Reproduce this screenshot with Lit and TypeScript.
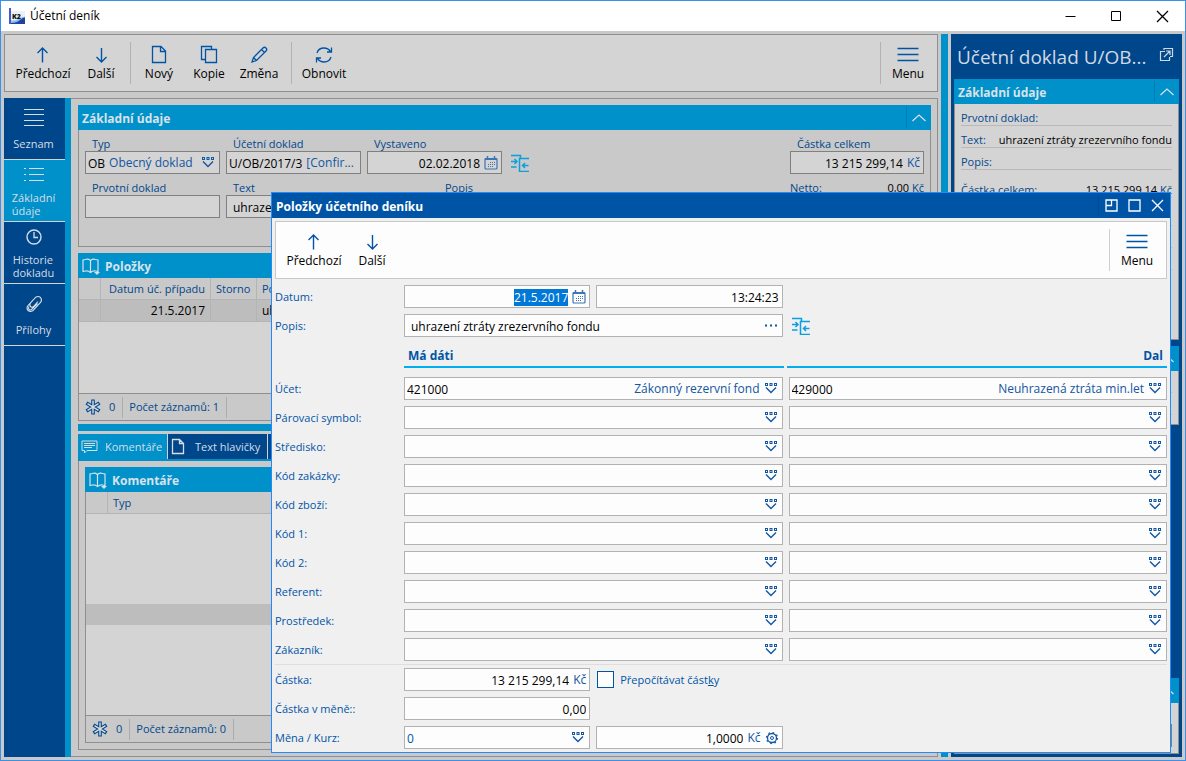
import { LitElement, html, css, svg, nothing } from "lit";
import { customElement } from "lit/decorators.js";
import { classMap } from "lit/directives/class-map.js";

const glyph = (w: number, h: number, body: unknown, cls = "") =>
  html`<svg class=${cls} width=${w} height=${h} viewBox="0 0 ${w} ${h}" fill="none" stroke="currentColor" aria-hidden="true">${body}</svg>`;

const icons = {
  logo: () => html`<svg width="16" height="16" viewBox="0 0 16 16" aria-hidden="true">
    <rect x="2" y="3" width="14" height="12" fill="#eceff5" />
    <rect x="0" y="0" width="2" height="16" fill="#4458d0" />
    <path d="M2 12.500Q6 13 9 11T16 8.500V16H2Z" fill="#7fc4f0" />
    <path d="M2 15Q8 15 11 12T16 9.500V16H2Z" fill="#24409c" />
    <text x="3" y="10.500" font-family="Open Sans, sans-serif" font-size="7" font-weight="800" fill="#111">K2</text>
  </svg>`,
  up: () => glyph(20, 20, svg`<path d="M9.500 3V17.500M4.500 8L9.500 3L14.500 8" stroke-width="1.400"/>`),
  down: () => glyph(20, 20, svg`<path d="M10.500 3V17M5.500 12L10.500 17L15.500 12" stroke-width="1.400"/>`),
  page: () => glyph(20, 20, svg`<path d="M3.500 1.500H12L16.500 6V17.500H3.500ZM11.500 1.500V6.500H16.500" stroke-width="1.300"/>`),
  sheet: () => glyph(14, 17, svg`<path d="M1.500 1.500H8.500L12.500 5.500V15.500H1.500ZM8.500 1.500V5.500H12.500M4 1.500H6.500" stroke-width="1.300"/>`, "tab-icon"),
  copy: () => glyph(20, 20, svg`<path d="M6 14.500H2.500V1.500H12.500V4M6.500 4.500H17.500V17.500H6.500Z" stroke-width="1.300"/>`),
  pencil: () => glyph(20, 20, svg`<path d="M3 17L4.500 12.500L14 3Q15.500 1.500 17 3Q18.500 4.500 17 6L7.500 15.500ZM12.500 4.500L15.500 7.500M4.500 12.500L7.500 15.500" stroke-width="1.300"/>`),
  refresh: () => glyph(20, 20, svg`<path d="M3 8Q4.500 3 10 3Q14 3 16.500 6.500M17.500 2.500V7H13M17 12Q15.500 17 10 17Q6 17 3.500 13.500M2.500 17.500V13H7" stroke-width="1.300"/>`),
  menu: () => glyph(22, 20, svg`<path d="M0.500 3.500H21.500M0.500 9.500H21.500M0.500 15.500H21.500" stroke-width="1.400"/>`),
  lines: () => glyph(20, 22, svg`<path d="M0 2.500H20M0 7.500H20M0 13.500H20M0 18.500H20"/>`),
  list: () => glyph(20, 22, svg`<path d="M5 4.500H20M5 10.500H20M5 16.500H20M0 4.500H2M0 10.500H2M0 16.500H2"/>`),
  clock: () => glyph(18, 22, svg`<circle cx="9" cy="11" r="7" stroke-width="1.400"/><path d="M9 6V11.500H13" stroke-width="1.300"/>`),
  clip: () => glyph(20, 22, svg`<path d="M9 7L4 12.500Q2 15 4 17.500Q6.500 19.500 9 17.500L16.500 9.500Q18.500 7 16.500 4.500Q14 2.500 11.500 4.500L6.500 10Q5 12 6.500 13.500Q8 15 9.500 13.500L14 8.500M13.500 10.500L7.500 16.500Q6 17.500 5 16.500Q4 15 5 13.500" stroke-width="1.100"/>`),
  lookup: () => glyph(14, 12, svg`<g fill="currentColor" stroke="none"><path fill-rule="evenodd" d="M1 0H4V3H1ZM2 1V2H3V1ZM5.500 0H8.500V3H5.500ZM6.500 1V2H7.500V1ZM10 0H13V3H10ZM11 1V2H12V1Z"/></g><path d="M2 4.500L7 9.500L12 4.500" stroke-width="1.400"/>`),
  calendar: () => glyph(14, 14, svg`<rect x="1" y="2.500" width="12" height="10.500" rx="1" stroke-width="1.200"/><path d="M1 3H13" stroke-width="2"/><path d="M3.500 0V3M10.500 0V3" stroke-width="1.500"/><path d="M6 6.500H12M4 8.500H12M4 10.500H10" stroke-dasharray="1 1" stroke-width="1"/>`, "soft"),
  dots: () => glyph(14, 12, svg`<path d="M1 5.500H3M6 5.500H8M11 5.500H13" stroke-width="2"/>`),
  gear: () => glyph(14, 14, svg`<circle cx="7" cy="7" r="4.500" stroke-width="1.300"/><circle cx="7" cy="7" r="1.500"/><circle cx="7" cy="7" r="5.500" stroke-width="1.300" stroke-dasharray="1.700 2.600"/>`),
  align: () => glyph(18, 18, svg`<path d="M0 1.500H9.500V5M0 13H5.500M18 4.500H8.500V17.500H18M0 7.500H5.500M3.500 5L6 7.500L3.500 10M17.500 11.500H12M14 9L11.500 11.500L14 14" stroke-width="1.500"/>`, "bright"),
  chevron: () => glyph(14, 8, svg`<path d="M.5 7L7 1L13.500 7" stroke-width="1.200"/>`),
  book: () => glyph(18, 18, svg`<path d="M8.500 3.500Q6 1.500 3.500 2.500L1 3V14.500L3.500 14Q6 13.500 8.500 15.500Q11 13.500 13.500 14L16 14.500V3L13.500 2.500Q11 1.500 8.500 3.500V15" stroke-width="1.200"/><path d="M12 15H18L15 18Z" fill="currentColor" stroke="none"/>`),
  flake: () => glyph(16, 16, svg`<path d="M8 0.500V15.500M1.500 4L14.500 12M14.500 4L1.500 12" stroke-width="3.600"/><path class="core" d="M8 1.500V14.500M2.500 4.600L13.500 11.400M13.500 4.600L2.500 11.400" stroke-width="1.400"/>`),
  comment: () => glyph(17, 14, svg`<path d="M1 1H16V10.500H6L3.500 13V10.500H1ZM3 3.500H14M3 5.500H14M3 7.500H11" stroke-width="1"/>`),
  open: () => glyph(15, 15, svg`<path d="M6 4.500H1.500V13.500H10.500V10M5 3V1.500H13.500V9.500H11M5 10L11 4M7 4H11V8" stroke-width="1.200"/>`),
  pin: () => glyph(13, 13, svg`<path d="M1 1H12V12H1ZM6.500 1V6.500H1" stroke-width="1.300"/>`),
  square: () => glyph(13, 13, svg`<path d="M1 1H12V12H1Z" stroke-width="1.300"/>`),
  cross: () => glyph(13, 13, svg`<path d="M1 1L12 12M12 1L1 12" stroke-width="1.300"/>`),
  bar: () => glyph(13, 13, svg`<path d="M1.500 6.500H11.500"/>`),
  maximize: () => glyph(13, 13, svg`<path d="M1.500 1.500H10.500V10.500H1.500Z"/>`),
};

const codeRows: [string, string, string, string, string][] = [
  ["Účet:", "421000", "Zákonný rezervní fond", "429000", "Neuhrazená ztráta min.let"],
  ["Párovací symbol:", "", "", "", ""],
  ["Středisko:", "", "", "", ""],
  ["Kód zakázky:", "", "", "", ""],
  ["Kód zboží:", "", "", "", ""],
  ["Kód 1:", "", "", "", ""],
  ["Kód 2:", "", "", "", ""],
  ["Referent:", "", "", "", ""],
  ["Prostředek:", "", "", "", ""],
  ["Zákazník:", "", "", "", ""],
];

interface FieldOptions {
  id: string;
  value?: string;
  note?: string;
  unit?: string;
  icon?: unknown;
  action?: string;
  right?: boolean;
  inset?: boolean;
  aria?: string;
  fit?: boolean;
  blue?: boolean;
}

@customElement("app-root")
export class AppRoot extends LitElement {
  static styles = css`
    :host {
      display: block;
      --navy: #00468a;
      --blue: #0054a6;
      --cyan: #0091cb;
      --dim: #c9c9c9;
      --pale: #d4d4d4;
      --edge: #8f8f8f;
      font-family: "Open Sans", "Noto Sans", sans-serif;
      font-size: 12px;
      line-height: 16px;
      color: #000;
    }
    * { box-sizing: border-box; }
    svg { display: block; flex: none; }
    button { font: inherit; color: inherit; background: none; border: 0; padding: 0; display: flex; align-items: center; justify-content: center; }
    h1, h2, h3, p { margin: 0; font: inherit; }
    .window { position: relative; display: flex; flex-direction: column; min-height: 100vh; border: 1px solid #3b91ea; background: var(--dim); }
    .titlebar { display: flex; align-items: center; height: 30px; flex: none; padding: 0 16px 0 8px; gap: 5px; background: #fff; }
    .titlebar h1 { flex: 1; font-size: 12px; }
    .caption { display: flex; gap: 33px; }
    .workspace { flex: 1; display: flex; gap: 3px; padding: 3px; min-height: 0; }
    .main { flex: 1; min-width: 0; display: flex; flex-direction: column; gap: 6px; }
    .splitter { width: 7px; flex: none; background: var(--cyan); }

    .toolbar { display: flex; height: 58px; flex: none; border: 1px solid var(--edge); background: var(--pale); padding: 0 2px 0 9px; color: #000; }
    .group { display: flex; }
    .group.narrow { padding: 0 7px 0 3px; }
    .group.last { padding-left: 3px; }
    .tool { flex-direction: column; justify-content: flex-start; width: 58px; padding-top: 10px; gap: 1px; white-space: nowrap; }
    .narrow .tool { width: 50px; }
    .menu-tool { width: 54px; }
    .tool svg { color: var(--blue); }
    .rule { width: 1px; margin: 7px 0; background: #b2b2b2; }
    .grow { flex: 1; }

    .columns { flex: 1; display: flex; min-height: 0; }
    .sidebar { width: 67px; flex: none; background: var(--navy); border-right: 6px solid var(--cyan); font-size: 11px; line-height: 13px; color: #d6dde5; }
    .side { width: 100%; height: 62px; flex-direction: column; justify-content: space-evenly; padding-right: 2px; text-align: left; border-bottom: 1px solid #d4d4d4; }
    .side.active { background: var(--cyan); }
    .content { flex: 1; min-width: 0; display: flex; flex-direction: column; border: 1px solid var(--edge); border-left: 0; padding: 6px 6px 6px 7px; }

    .bar { display: flex; align-items: center; gap: 5px; height: 25px; flex: none; padding-left: 4px; background: var(--cyan); color: #d9e2e8; }
    .bar h2 { flex: 1; font-weight: 700; font-size: 12px; line-height: 18px; padding-top: 2px; }
    .fold { width: 25px; height: 21px; border-left: 1px solid #007db0; }
    .boxed { border: 1px solid var(--edge); border-top: 0; }

    .header-form { display: flex; justify-content: space-between; padding: 7px 6px 28px; }
    .left { display: grid; grid-template-columns: repeat(3, 135px) auto; gap: 7px 6px; }
    .stack { display: flex; flex-direction: column; min-width: 0; }
    .stack > label { padding-left: 7px; font-size: 11px; line-height: 14px; color: #00478c; }
    .wide { grid-column: 2 / 4; }
    .pair { display: flex; gap: 84px; line-height: 14px; font-size: 11px; padding-left: 7px; }
    .pair label { width: 128px; color: #00478c; }
    .totals { width: 134px; display: flex; flex-direction: column; gap: 7px; }
    .line { display: flex; justify-content: space-between; font-size: 11px; line-height: 14px; }
    .tie { align-self: end; height: 23px; padding-left: 3px; }
    .tie-left { justify-content: flex-start; padding-left: 3px; }
    .bright { color: #0a9fe0; }
    .ink { color: #00478c; }

    .field { display: flex; align-items: center; gap: 4px; height: 23px; min-width: 0; border: 1px solid #808080; background: var(--pale); padding: 0 4px 0 2px; white-space: nowrap; }
    .field input { flex: 1 1 0; min-width: 0; width: 0; border: 0; outline: 0; padding: 1px 0 0; background: none; font: inherit; color: inherit; height: 19px; }
    .field.right input { text-align: right; }
    .field.right { padding-right: 3px; }
    .field.inset { padding-left: 6px; }
    .field.fit input { flex: none; field-sizing: content; width: auto; }
    .field .note { color: #1355a0; padding-top: 1px; }
    .field .fill { flex: 1; overflow: hidden; text-overflow: ellipsis; }
    .field button { color: #1257a5; }
    .soft { color: #3d74b4; }
    .blue input { color: var(--blue); }
    input::selection { background: #0078d7; color: #fff; }

    .panel { display: flex; flex-direction: column; flex: none; margin-top: 6px; }
    table { border-collapse: separate; border-spacing: 0; font-size: 12px; width: 100%; table-layout: fixed; }
    th { font-weight: 400; font-size: 11px; color: #00478c; background: var(--dim); text-align: left; }
    th, td { height: 22px; padding: 0 5px; border: 1px solid #b4b4b4; border-top: 0; border-left: 0; line-height: 16px; white-space: nowrap; overflow: hidden; }
    .rowed td { background: #bdbdbd; }
    .num { text-align: right; }
    .c0 { width: 22px; }
    .c1 { width: 110px; }
    .c2 { width: 46px; }
    .grid { flex: 1; background: var(--pale); overflow: hidden; }
    .empty { margin-top: 90px; height: 21px; background: #bdbdbd; }
    .status { display: flex; align-items: center; height: 27px; flex: none; border-top: 1px solid var(--edge); background: var(--dim); color: #00478c; font-size: 11px; padding-left: 6px; }
    .status span { display: flex; align-items: center; height: 21px; padding: 0 7px 0 6px; border-right: 1px solid #ababab; }
    .status svg { margin-right: 2px; }
    .core { stroke: #dcdcdc; }
    .hsplit { height: 7px; flex: none; margin: 3px 0; background: var(--cyan); }
    .tabs { display: flex; gap: 1px; height: 27px; flex: none; border-bottom: 2px solid var(--cyan); font-size: 11px; color: #d6dde5; background: linear-gradient(#d4d4d4, #d4d4d4) 0 0 / 190px 25px no-repeat; }
    .tab { height: 25px; width: 99px; padding: 0 4px 0 3px; gap: 7px; justify-content: flex-start; background: var(--navy); white-space: nowrap; }
    .tab.active { width: 89px; background: var(--cyan); }
    .tab-icon { margin-right: 3px; }
    .tabpage { flex: 1; min-height: 0; display: flex; flex-direction: column; padding: 6px; }
    .comments { flex: 1; margin: 0; }
    .items { height: 168px; }
    .body { display: flex; flex-direction: column; flex: 1; min-height: 0; }

    .preview { width: 231px; flex: none; display: flex; flex-direction: column; background: var(--navy); padding: 0 3px 3px; }
    .preview-head { display: flex; align-items: center; height: 45px; flex: none; padding: 0 5px 0 3px; color: #d0d9e3; }
    .preview-head h2 { flex: 1; font-size: 19px; line-height: 26px; white-space: nowrap; }
    .preview-head button { padding-bottom: 4px; }
    .sheet { background: var(--pale); padding: 5px 6px 0; font-size: 11px; line-height: 17px; }
    .sheet.first { height: 236px; }
    .sheet.second { height: 54px; margin-bottom: 6px; }
    .sheet.third { height: 51px; padding-top: 21px; }
    .fact { display: flex; justify-content: space-between; height: 17px; margin-bottom: 5px; border-bottom: 1px solid #b9b9b9; white-space: nowrap; color: #00478c; }
    .fact b { font-weight: 400; color: #000; }
    .apart { margin-top: 11px; }
    .gap { height: 6px; flex: none; }

    .dialog { position: absolute; left: 270px; right: 14px; top: 191px; border: 1px solid #1e8cff; background: #f0f0f0; color: #000; }
    .dialog-title { display: flex; align-items: center; height: 25px; padding-left: 4px; background: var(--blue); color: #fff; }
    .dialog-title h2 { flex: 1; font-weight: 700; font-size: 12px; line-height: 18px; padding-top: 2px; }
    .dialog-actions { display: flex; align-items: center; gap: 10px; height: 21px; padding: 0 6px 0 6px; border-left: 1px solid #004a94; }
    .dialog .toolbar { margin: 3px 3px 0; background: #fdfdfd; border-color: #c8c8c8; }
    .dialog .rule { background: #cfcfcf; }
    .dialog form { padding: 6px 3px 3px; display: flex; flex-direction: column; gap: 6px; }
    .row { display: grid; grid-template-columns: 123px minmax(0, 1fr) minmax(0, 1fr); gap: 6px; align-items: center; }
    .row > label, .check label { font-size: 11px; color: var(--blue); }
    .dialog .field { background: #fdfdfd; border-color: #b2b2b2; }
    .half { display: grid; grid-template-columns: 1fr 1fr; gap: 6px; min-width: 0; }
    .sides { display: grid; grid-template-columns: 1fr 1fr; gap: 3px; margin: 0 0 3px 129px; }
    .sides h3 { height: 25px; padding: 0 4px; line-height: 25px; border-bottom: 2px solid #00adee; color: var(--blue); font-weight: 700; font-size: 12px; }
    .sides .end { text-align: right; }
    .total { border-top: 1px solid #dedede; padding-top: 3px; margin-top: -3px; }
    .check { display: flex; align-items: center; gap: 6px; }
    .check input { appearance: none; width: 17px; height: 17px; margin: 0 0 0 1px; border: 1px solid var(--blue); background: #fdfdfd; }
  `;

  protected firstUpdated() {
    const date = this.renderRoot.querySelector<HTMLInputElement>("#entry-date");
    date?.focus({ preventScroll: true });
    date?.select();
  }

  private field(o: FieldOptions) {
    const cls = classMap({ field: true, right: !!o.right, inset: !!o.inset, fit: !!o.fit, blue: !!o.blue });
    return html`<div class=${cls}>
      <input id=${o.id} type="text" autocomplete="off" .value=${o.value ?? ""} aria-label=${o.aria ?? nothing} />
      ${o.note ? html`<span class=${classMap({ note: true, fill: !!o.fit })}>${o.note}</span>` : nothing}
      ${o.unit ? html`<span class="note">${o.unit}</span>` : nothing}
      ${o.icon ? html`<button type="button" aria-label=${o.action ?? "Vybrat"}>${o.icon}</button>` : nothing}
    </div>`;
  }

  private tool(label: string, icon: unknown, cls = "") {
    return html`<button type="button" class="tool ${cls}">${icon}<span>${label}</span></button>`;
  }

  private menuGroup() {
    return html`<span class="grow"></span><span class="rule"></span>${this.tool("Menu", icons.menu(), "menu-tool")}`;
  }

  private side(label: unknown, icon: unknown, active = false) {
    return html`<button type="button" class=${classMap({ side: true, active })}>${icon}<span>${label}</span></button>`;
  }

  private fold() {
    return html`<button type="button" class="fold" aria-label="Sbalit">${icons.chevron()}</button>`;
  }

  private status(count: number) {
    return html`<div class="status">${icons.flake()}<span>0</span><span>Počet záznamů: ${count}</span></div>`;
  }

  private headerCard() {
    return html`<section>
      <div class="bar"><h2>Základní údaje</h2>${this.fold()}</div>
      <div class="boxed header-form">
        <div class="left">
          <div class="stack"><label for="type">Typ</label>${this.field({ id: "type", value: "OB", note: "Obecný doklad", icon: icons.lookup(), fit: true })}</div>
          <div class="stack"><label for="doc">Účetní doklad</label>${this.field({ id: "doc", value: "U/OB/2017/3", note: "[Confir...", fit: true })}</div>
          <div class="stack"><label for="issued">Vystaveno</label>${this.field({ id: "issued", value: "02.02.2018", icon: icons.calendar(), action: "Kalendář", right: true })}</div>
          <button type="button" class="tie" aria-label="Porovnat">${icons.align()}</button>
          <div class="stack"><label for="origin">Prvotní doklad</label>${this.field({ id: "origin" })}</div>
          <div class="stack wide">
            <div class="pair"><label for="text">Text</label><span class="ink">Popis</span></div>
            ${this.field({ id: "text", value: "uhrazení ztráty zrezervního fondu", inset: true })}
          </div>
        </div>
        <div class="totals">
          <div class="stack"><label for="sum">Částka celkem</label>${this.field({ id: "sum", value: "13 215 299,14", unit: "Kč", right: true })}</div>
          <div class="line"><span class="ink">Netto:</span><span>0,00 <span class="ink">Kč</span></span></div>
        </div>
      </div>
    </section>`;
  }

  private itemsCard() {
    return html`<section class="panel items">
      <div class="bar">${icons.book()}<h2>Položky</h2></div>
      <div class="boxed body">
        <div class="grid">
          <table>
            <colgroup><col class="c0" /><col class="c1" /><col class="c2" /><col /></colgroup>
            <thead><tr><th></th><th class="num">Datum úč. případu</th><th>Storno</th><th>Popis</th></tr></thead>
            <tbody><tr class="rowed"><td></td><td class="num">21.5.2017</td><td></td><td>uhrazení ztráty zrezervního fondu</td></tr></tbody>
          </table>
        </div>
        ${this.status(1)}
      </div>
    </section>`;
  }

  private commentsArea() {
    return html`<div class="tabs" role="tablist">
        <button type="button" role="tab" aria-selected="true" class="tab active">${icons.comment()}Komentáře</button>
        <button type="button" role="tab" aria-selected="false" class="tab">${icons.sheet()}Text hlavičky</button>
        <button type="button" role="tab" aria-selected="false" class="tab" aria-label="Další záložka"></button>
      </div>
      <div class="boxed tabpage">
        <section class="panel comments">
          <div class="bar">${icons.book()}<h2>Komentáře</h2></div>
          <div class="boxed body">
            <div class="grid">
              <table>
                <colgroup><col class="c0" /><col /></colgroup>
                <thead><tr><th></th><th>Typ</th></tr></thead>
              </table>
              <div class="empty"></div>
            </div>
            ${this.status(0)}
          </div>
        </section>
      </div>`;
  }

  private preview() {
    return html`<aside class="preview">
      <div class="preview-head"><h2>Účetní doklad U/OB...</h2><button type="button" aria-label="Otevřít">${icons.open()}</button></div>
      <div class="bar"><h2>Základní údaje</h2>${this.fold()}</div>
      <div class="boxed sheet first">
        <div class="fact">Prvotní doklad:</div>
        <div class="fact">Text: <b>uhrazení ztráty zrezervního fondu</b></div>
        <div class="fact">Popis:</div>
        <div class="fact apart">Částka celkem:<span><b>13 215 299,14</b> Kč</span></div>
        <div class="fact apart"></div>
        <div class="fact"></div>
        <div class="fact"></div>
      </div>
      <div class="gap"></div>
      <div class="bar"><h2></h2>${this.fold()}</div>
      <div class="boxed sheet second">
        <div class="fact"></div>
        <div class="fact"></div>
      </div>
      <span class="grow"></span>
      <div class="bar"><h2></h2>${this.fold()}</div>
      <div class="boxed sheet third">${this.field({ id: "filter", aria: "Hodnota" })}</div>
    </aside>`;
  }

  private dialog() {
    return html`<section class="dialog" role="dialog" aria-labelledby="dialog-title">
      <div class="dialog-title">
        <h2 id="dialog-title">Položky účetního deníku</h2>
        <div class="dialog-actions">
          <button type="button" aria-label="Ukotvit">${icons.pin()}</button>
          <button type="button" aria-label="Maximalizovat">${icons.square()}</button>
          <button type="button" aria-label="Zavřít">${icons.cross()}</button>
        </div>
      </div>
      <div class="toolbar">
        <div class="group">${this.tool("Předchozí", icons.up())}${this.tool("Další", icons.down())}</div>
        ${this.menuGroup()}
      </div>
      <form>
        <div class="row">
          <label for="entry-date">Datum:</label>
          <div class="half">
            ${this.field({ id: "entry-date", value: "21.5.2017", icon: icons.calendar(), action: "Kalendář", right: true })}
            ${this.field({ id: "entry-time", value: "13:24:23", right: true, aria: "Čas" })}
          </div>
        </div>
        <div class="row">
          <label for="entry-text">Popis:</label>
          ${this.field({ id: "entry-text", value: "uhrazení ztráty zrezervního fondu", icon: icons.dots(), inset: true })}
          <button type="button" class="tie-left" aria-label="Porovnat">${icons.align()}</button>
        </div>
        <div class="sides"><h3>Má dáti</h3><h3 class="end">Dal</h3></div>
        ${codeRows.map(([label, debit, debitNote, credit, creditNote], i) => html`<div class="row">
          <label for="debit-${i}">${label}</label>
          ${this.field({ id: `debit-${i}`, value: debit, note: debitNote, icon: icons.lookup() })}
          ${this.field({ id: `credit-${i}`, value: credit, note: creditNote, icon: icons.lookup(), aria: `${label} Dal` })}
        </div>`)}
        <div class="row total">
          <label for="amount">Částka:</label>
          <div class="half">
            ${this.field({ id: "amount", value: "13 215 299,14", unit: "Kč", right: true })}
            <div class="check"><input id="recalc" type="checkbox" /><label for="recalc">Přepočítávat část<u>k</u>y</label></div>
          </div>
        </div>
        <div class="row">
          <label for="foreign">Částka v měně::</label>
          <div class="half">${this.field({ id: "foreign", value: "0,00", right: true })}</div>
        </div>
        <div class="row">
          <label for="currency">Měna / Kurz:</label>
          <div class="half">
            ${this.field({ id: "currency", value: "0", icon: icons.lookup(), blue: true })}
            ${this.field({ id: "rate", value: "1,0000", unit: "Kč", icon: icons.gear(), action: "Nastavení", right: true, aria: "Kurz" })}
          </div>
        </div>
      </form>
    </section>`;
  }

  render() {
    return html`<div class="window">
      <header class="titlebar">
        ${icons.logo()}
        <h1>Účetní deník</h1>
        <div class="caption">
          <button type="button" aria-label="Minimalizovat">${icons.bar()}</button>
          <button type="button" aria-label="Maximalizovat">${icons.maximize()}</button>
          <button type="button" aria-label="Zavřít">${icons.cross()}</button>
        </div>
      </header>
      <div class="workspace">
        <main class="main">
          <div class="toolbar">
            <div class="group">${this.tool("Předchozí", icons.up())}${this.tool("Další", icons.down())}</div>
            <span class="rule"></span>
            <div class="group narrow">${this.tool("Nový", icons.page())}${this.tool("Kopie", icons.copy())}${this.tool("Změna", icons.pencil())}</div>
            <span class="rule"></span>
            <div class="group last">${this.tool("Obnovit", icons.refresh())}</div>
            ${this.menuGroup()}
          </div>
          <div class="columns">
            <nav class="sidebar">
              ${this.side("Seznam", icons.lines())}
              ${this.side(html`Základní<br />údaje`, icons.list(), true)}
              ${this.side(html`Historie<br />dokladu`, icons.clock())}
              ${this.side("Přílohy", icons.clip())}
            </nav>
            <div class="content">
              ${this.headerCard()} ${this.itemsCard()}
              <div class="hsplit"></div>
              ${this.commentsArea()}
            </div>
          </div>
        </main>
        <div class="splitter"></div>
        ${this.preview()}
      </div>
      ${this.dialog()}
    </div>`;
  }
}
